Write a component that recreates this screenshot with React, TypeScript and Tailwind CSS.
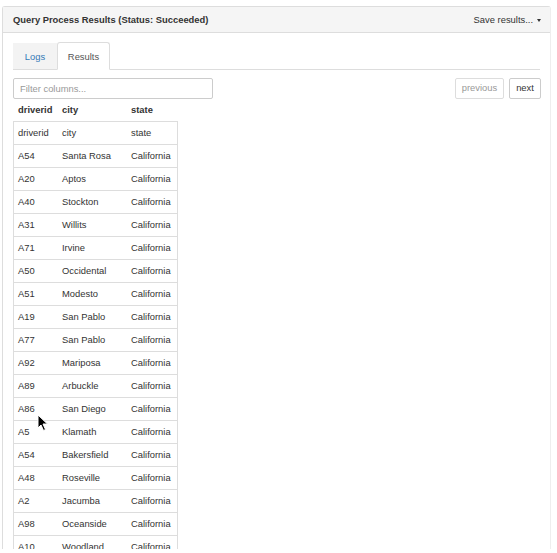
import React from 'react';

const rows: [string, string, string][] = [
  ['driverid', 'city', 'state'],
  ['A54', 'Santa Rosa', 'California'],
  ['A20', 'Aptos', 'California'],
  ['A40', 'Stockton', 'California'],
  ['A31', 'Willits', 'California'],
  ['A71', 'Irvine', 'California'],
  ['A50', 'Occidental', 'California'],
  ['A51', 'Modesto', 'California'],
  ['A19', 'San Pablo', 'California'],
  ['A77', 'San Pablo', 'California'],
  ['A92', 'Mariposa', 'California'],
  ['A89', 'Arbuckle', 'California'],
  ['A86', 'San Diego', 'California'],
  ['A5', 'Klamath', 'California'],
  ['A54', 'Bakersfield', 'California'],
  ['A48', 'Roseville', 'California'],
  ['A2', 'Jacumba', 'California'],
  ['A98', 'Oceanside', 'California'],
  ['A10', 'Woodland', 'California'],
];

const cols = 'grid grid-cols-[44px_69px_52px]';

export default function App() {
  return (
    <div
      className="relative h-[549px] overflow-hidden bg-white pl-[2px] pt-[6px] text-[#333] text-[9.4px]"
      style={{ fontFamily: '"Liberation Sans", Arial, Helvetica, sans-serif' }}
    >
      <div className="w-[549px] rounded-tl-[3px] rounded-tr-[3px] border border-b-0 border-[#ddd] border-r-[#eee]">
        {/* Panel header */}
        <div className="flex h-[26px] items-center justify-between border-b border-[#ddd] bg-[#f5f5f5] pl-[10px] pr-[9px] pt-[2px]">
          <span className="font-bold">Query Process Results (Status: Succeeded)</span>
          <button type="button" className="flex items-center gap-[4px]">
            Save results...
            <span className="mt-[1px] h-0 w-0 border-x-[2px] border-t-[3px] border-x-transparent border-t-[#333]" />
          </button>
        </div>

        {/* Panel body */}
        <div className="px-[10px] pt-[10px]">
          <div className="flex h-[27px] items-end border-b border-[#ddd]">
            <div className="mb-[-1px] flex h-[27px] w-[44px] items-center justify-center border-b border-[#ddd] bg-[#f3f3f3] pt-[2px] text-[#337ab7]">
              Logs
            </div>
            <div className="mb-[-1px] flex h-[28px] w-[53px] items-center justify-center rounded-t-[3px] border border-[#ddd] border-b-white bg-white pt-[2px] text-[#555]">
              Results
            </div>
          </div>

          <div className="mt-[8px] flex items-start justify-between">
            <input
              type="text"
              placeholder="Filter columns..."
              className="h-[21px] w-[200px] rounded-[2px] border border-[#ccc] px-[6px] text-[9.4px] outline-none placeholder:text-[#999]"
            />
            <div className="mr-[-1px] flex gap-[5px]">
              <button
                type="button"
                className="h-[21px] w-[49px] rounded-[2px] border border-[#ddd] bg-white text-[#999]"
              >
                previous
              </button>
              <button
                type="button"
                className="h-[21px] w-[32px] rounded-[2px] border border-[#ccc] bg-white text-[#333]"
              >
                next
              </button>
            </div>
          </div>

          <div className={`${cols} h-[22px] items-center pt-[1px] font-bold`}>
            <span className="pl-[5px]">driverid</span>
            <span className="pl-[5px]">city</span>
            <span className="pl-[5px]">state</span>
          </div>

          <div className="w-[165px] border border-b-0 border-[#ddd]">
            {rows.map((r, i) => (
              <div key={i} className={`${cols} h-[23px] items-center border-b border-[#ddd] pt-[1px]`}>
                <span className="pl-[4px]">{r[0]}</span>
                <span className="pl-[4px]">{r[1]}</span>
                <span className="pl-[4px]">{r[2]}</span>
              </div>
            ))}
          </div>
        </div>
      </div>

      {/* mouse pointer */}
      <svg
        className="absolute left-[37px] top-[414px]"
        width="12"
        height="18"
        viewBox="0 0 12 18"
      >
        <path d="M1 1 L1 14 L4 11 L6.5 16.5 L8.5 15.5 L6 10 L10.5 10 Z" fill="#000" stroke="#fff" strokeWidth="1" />
      </svg>
    </div>
  );
}
